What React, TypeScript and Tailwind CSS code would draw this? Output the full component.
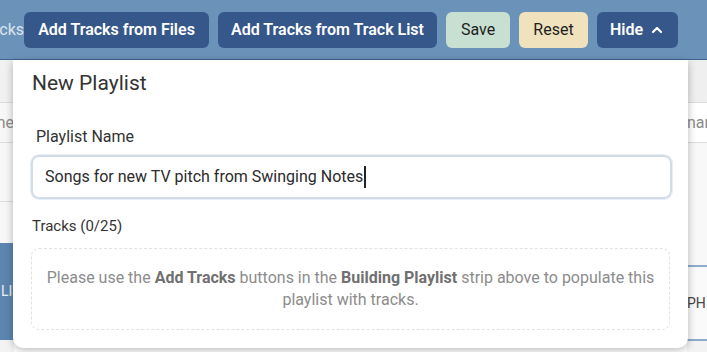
import { ChevronUp } from "lucide-react";

function LeftPeek() {
  return (
    <div className="flex w-[14px] shrink-0 flex-col overflow-hidden whitespace-nowrap text-[16px]">
      <div className="h-[43px] bg-[#f1f1f1] border-b border-[#dcdcdc]" />
      <div className="flex h-[40px] items-center justify-end bg-[#f7f7f7] border-b border-[#dcdcdc] text-[#8c8c8c]">
        Name
      </div>
      <div className="h-[59px] bg-[#f7f7f7] border-b border-[#dcdcdc]" />
      <div className="h-[41px] bg-[#f7f7f7]" />
      <div className="flex h-[97px] items-center bg-[#5d85b0] pl-[1px] text-[14px] text-[#e8eef5]">
        LIST
      </div>
      <div className="flex-1 bg-[#f3f3f3]" />
    </div>
  );
}

function RightPeek() {
  return (
    <div className="flex w-[20px] shrink-0 flex-col overflow-hidden whitespace-nowrap text-[16px]">
      <div className="h-[43px] bg-[#efefef] border-b border-[#dcdcdc]" />
      <div className="flex h-[40px] items-center bg-white border-b border-[#dcdcdc] text-[#8c8c8c]">
        name
      </div>
      <div className="h-[124px] bg-[#f8f8f8] border-b-2 border-[#8eaccb]" />
      <div className="flex h-[74px] items-center bg-[#fafafa] border-b-2 border-[#8eaccb] text-[14px] text-[#444]">
        PH
      </div>
      <div className="flex-1 bg-[#f3f3f3]" />
    </div>
  );
}

export default function App() {
  return (
    <div className="relative h-[352px] w-[707px] overflow-hidden bg-white font-['Roboto',sans-serif]">
      <header className="flex h-[60px] items-center border-b border-[#40648e] bg-[#6b93ba]">
        <div className="flex w-[24px] shrink-0 justify-end overflow-hidden whitespace-nowrap text-[16px] text-[#dbe4ee]">
          Tracks
        </div>
        <div className="flex items-center gap-[9px] text-[16px]">
          <button className="h-[36px] w-[185px] rounded-[6px] bg-[#35578a] font-semibold text-white">
            Add Tracks from Files
          </button>
          <button className="h-[36px] w-[219px] rounded-[6px] bg-[#35578a] font-semibold text-white">
            Add Tracks from Track List
          </button>
          <button className="h-[36px] w-[64px] rounded-[6px] bg-[#c7e0d2] font-normal text-[#1e1e1e]">
            Save
          </button>
          <button className="h-[36px] w-[69px] rounded-[6px] bg-[#efe2bd] font-normal text-[#1e1e1e]">
            Reset
          </button>
          <button className="flex h-[36px] w-[81px] items-center justify-center gap-[6px] rounded-[6px] bg-[#35578a] font-semibold text-white">
            Hide
            <ChevronUp size={16} strokeWidth={3.2} />
          </button>
        </div>
      </header>

      <div className="flex h-[292px] justify-between">
        <LeftPeek />
        <RightPeek />
      </div>

      <div className="absolute left-[13px] top-[60px] h-[288px] w-[675px] rounded-b-[10px] bg-white px-[18px] pt-[11px] shadow-[0_2px_8px_rgba(0,0,0,0.28)]">
        <h2 className="ml-[1px] text-[21px] leading-[24px] text-[#333]">New Playlist</h2>
        <label className="ml-[5px] mt-[32px] block text-[16px] leading-[20px] text-[#333]">Playlist Name</label>
        <div className="mt-[8px] flex h-[44px] w-[641px] items-center rounded-[8px] border-2 border-[#d2dce7] px-[12px] text-[16px] text-[#2b2b2b] shadow-[0_0_0_1px_#e9eff5]">
          Songs for new TV pitch from Swinging Notes
          <span className="ml-[1px] inline-block h-[22px] w-[2px] bg-[#222]" />
        </div>
        <div className="ml-[1px] mt-[17px] text-[15px] leading-[20px] text-[#333]">Tracks (0/25)</div>
        <div className="mt-[12px] h-[82px] w-[639px] rounded-[8px] border border-dashed border-[#e2e2e2] px-[12px] pt-[18px] text-center text-[16px] leading-[22px] text-[#8c8c8c]">
          Please use the <b className="font-bold text-[#707070]">Add Tracks</b> buttons in the{" "}
          <b className="font-bold text-[#707070]">Building Playlist</b> strip above to populate this playlist with tracks.
        </div>
      </div>
    </div>
  );
}
